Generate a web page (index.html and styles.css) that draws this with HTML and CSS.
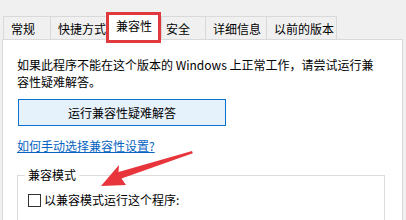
FILE: index.html
```html
<!DOCTYPE html>
<html lang="zh-CN">
<head>
<meta charset="utf-8">
<link rel="stylesheet" href="styles.css">
</head>
<body>
<div class="window">
  <div class="tabs">
    <div class="tab w1">常规</div>
    <div class="tab w2">快捷方式</div>
    <div class="tab active w3">兼容性</div>
    <div class="tab w4">安全</div>
    <div class="tab w5">详细信息</div>
    <div class="tab w6">以前的版本</div>
  </div>
  <div class="panel">
    <p class="desc">如果此程序不能在这个版本的 Windows 上正常工作，请尝试运行兼<br>容性疑难解答。</p>
    <div class="btn">运行兼容性疑难解答</div>
    <a class="link" href="#">如何手动选择兼容性设置?</a>
    <fieldset class="group">
      <legend>兼容模式</legend>
      <label class="check"><span class="box"></span>以兼容模式运行这个程序:</label>
    </fieldset>
  </div>
  <svg class="arrow" width="406" height="220" viewBox="0 0 406 220">
    <polygon points="101,186 119,165 118.5,172 192,151 192.8,153.2 121.5,178.5 126,185" fill="#e8353b"/>
  </svg>
</div>
</body>
</html>
```
FILE: styles.css
```css
* { box-sizing: border-box; }
html, body { margin: 0; padding: 0; }
body {
  width: 406px;
  height: 220px;
  overflow: hidden;
  background: #f0f0f0;
  font-family: "Noto Sans CJK SC", "Noto Sans", sans-serif;
  font-size: 12px;
  color: #000;
}
.window { position: relative; width: 406px; height: 220px; }
.tabs {
  display: flex;
  align-items: flex-end;
  height: 40px;
  padding-left: 3px;
  position: relative;
  z-index: 2;
}
.tab {
  height: 23px;
  margin-bottom: 1px;
  border: 1px solid #d9d9d9;
  border-bottom: none;
  border-right: none;
  background: #f0f0f0;
  line-height: 23px;
  padding-left: 7px;
  white-space: nowrap;
}
.w1 { width: 47px; }
.w2 { width: 57px; }
.w3 { width: 54px; }
.w4 { width: 44px; padding-left: 4px; }
.w5 { width: 61px; }
.w6 { width: 71px; border-right: 1px solid #d9d9d9; }
.tab.active {
  height: 28px;
  margin-bottom: 0;
  background: #fff;
  border: none;
  text-align: center;
  padding-left: 0;
  line-height: 27px;
  position: relative;
}
.tab.active::after {
  content: "";
  position: absolute;
  left: -1px;
  top: 0;
  right: 0;
  bottom: -3px;
  border: 3px solid #e0393e;
}
.panel {
  margin-left: 2px;
  width: 401px;
  height: 190px;
  margin-top: -1px;
  background: #fff;
  border: 1px solid #d9d9d9;
  padding: 16px 0 0 14px;
}
.desc {
  margin: 0;
  line-height: 17px;
  white-space: nowrap;
}
.btn {
  margin-top: 9px;
  margin-left: 1px;
  width: 208px;
  height: 27px;
  border: 1px solid #0a72c8;
  background: #e5f1fb;
  text-align: center;
  line-height: 25px;
}
.link {
  display: inline-block;
  margin-top: 11px;
  color: #0563c1;
  text-decoration: underline;
  line-height: 17px;
}
.group {
  margin: 14px 0 0 0;
  width: 368px;
  height: 60px;
  border: 1px solid #dcdcdc;
  padding: 5px 0 0 10px;
}
.group legend {
  padding: 0 3px;
  margin-left: -3px;
  line-height: 14px;
}
.check {
  display: flex;
  align-items: center;
  line-height: 16px;
  margin-top: 5px;
}
.box {
  width: 13px;
  height: 13px;
  border: 1px solid #333;
  background: #fff;
  margin-right: 3px;
}
.arrow {
  position: absolute;
  left: 0;
  top: 0;
  pointer-events: none;
  z-index: 5;
}
```
